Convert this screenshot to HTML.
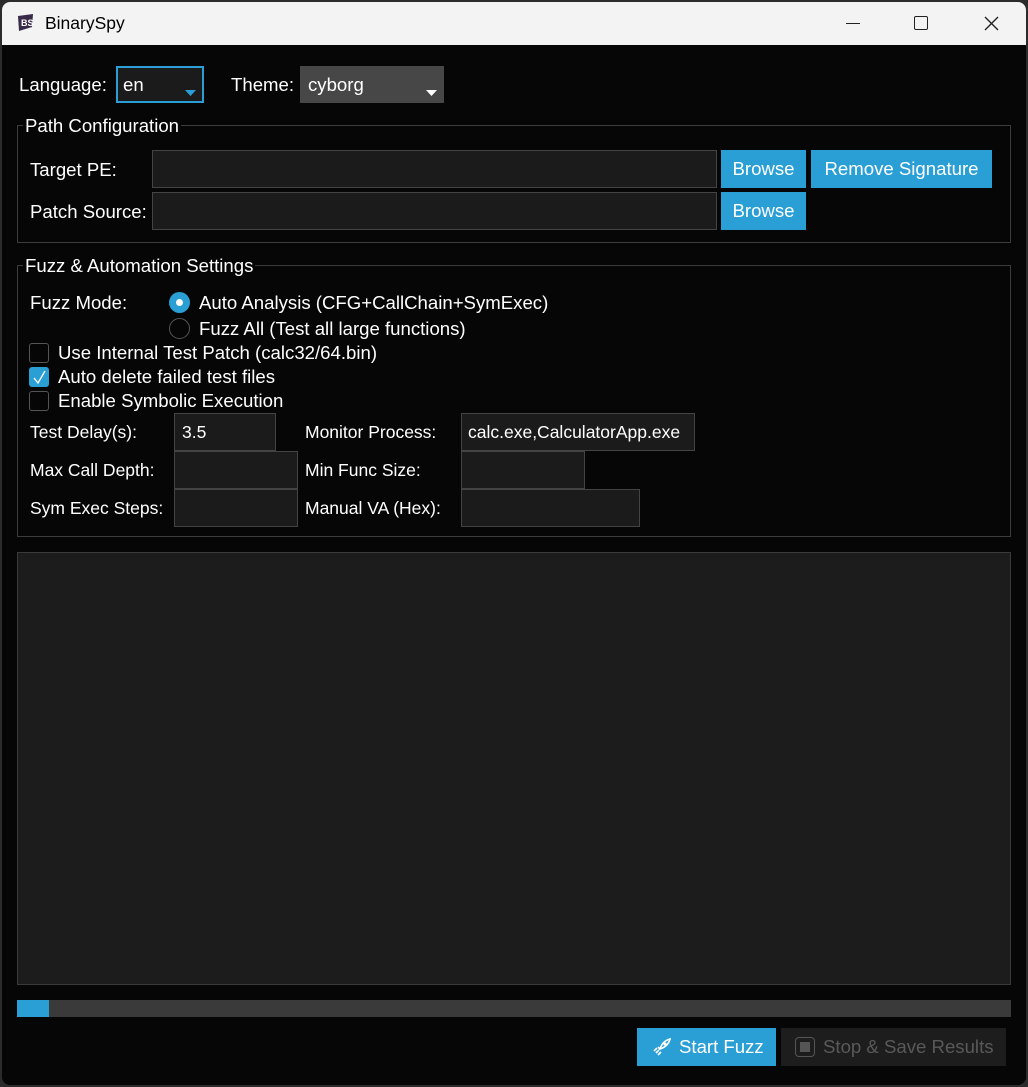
<!DOCTYPE html>
<html><head><meta charset="utf-8"><style>
*{margin:0;padding:0;box-sizing:border-box}
body{width:1028px;height:1087px;background:#2b2b2b;position:relative;overflow:hidden;font-family:"Liberation Sans",sans-serif;font-size:18.6px;color:#fff}
.win{position:absolute;left:2px;top:2px;width:1024px;height:1083px;background:#060606;border-radius:8px;overflow:hidden}
.tb{position:absolute;left:0;top:0;width:100%;height:43px;background:#f3f3f3;color:#000}
.a{position:absolute;white-space:nowrap}
.in{position:absolute;background:#1b1b1b;border:1px solid #444}
.btn{position:absolute;background:#2a9fd6;color:#fff;text-align:center}
.gb{position:absolute;border:1px solid #3c3c3c}
.lg{position:absolute;background:#060606;padding:0 2px;white-space:nowrap}
.cb{position:absolute;width:20px;height:20px;border:1.5px solid #555;border-radius:3px;background:#060606}
.n{font-size:17.5px}
</style></head><body><div class="win">
<div class="tb">
<svg class="a" style="left:13px;top:10px" width="22" height="22" viewBox="0 0 22 22"><path d="M3 4 L18 2 L17 15 L4 19 Z" fill="#3a2a4a"/><text x="6" y="14" font-size="9" fill="#fff" font-weight="bold" font-family="Liberation Sans">BS</text></svg>
<div class="a" style="left:43px;top:11px;font-size:17.5px">BinarySpy</div>
<div class="a" style="left:844px;top:21px;width:14px;height:1px;background:#222"></div>
<div class="a" style="left:912px;top:14px;width:14px;height:14px;border:1.5px solid #222;border-radius:2px"></div>
<svg class="a" style="left:982px;top:14px" width="15" height="15"><path d="M1 1L14 14M14 1L1 14" stroke="#222" stroke-width="1.4"/></svg>
</div>

<div class="a" style="left:17px;top:72px">Language:</div>
<div class="in" style="left:114px;top:64px;width:88px;height:37px;border:2px solid #2a9fd6"></div>
<div class="a" style="left:121px;top:72px">en</div>
<svg class="a" style="left:183px;top:88px" width="11" height="6"><path d="M0 0H11L5.5 6Z" fill="#2a9fd6"/></svg>
<div class="a" style="left:229px;top:72px">Theme:</div>
<div class="a" style="left:298px;top:64px;width:144px;height:37px;background:#474747"></div>
<div class="a" style="left:306px;top:72px">cyborg</div>
<svg class="a" style="left:424px;top:88px" width="11" height="6"><path d="M0 0H11L5.5 6Z" fill="#fff"/></svg>

<div class="gb" style="left:15px;top:123px;width:994px;height:118px"></div>
<div class="lg" style="left:21px;top:113px">Path Configuration</div>
<div class="a" style="left:28px;top:157px">Target PE:</div>
<div class="in" style="left:150px;top:148px;width:565px;height:38px"></div>
<div class="btn" style="left:719px;top:148px;width:85px;height:38px;line-height:38px">Browse</div>
<div class="btn" style="left:809px;top:148px;width:181px;height:38px;line-height:38px">Remove Signature</div>
<div class="a" style="left:28px;top:199px">Patch Source:</div>
<div class="in" style="left:150px;top:190px;width:565px;height:38px"></div>
<div class="btn" style="left:719px;top:190px;width:85px;height:38px;line-height:38px">Browse</div>

<div class="gb" style="left:15px;top:263px;width:994px;height:272px"></div>
<div class="lg" style="left:21px;top:253px">Fuzz &amp; Automation Settings</div>
<div class="a" style="left:28px;top:290px">Fuzz Mode:</div>
<div class="a" style="left:167px;top:290px;width:21px;height:21px;border-radius:50%;background:#2a9fd6"></div>
<div class="a" style="left:174px;top:297px;width:7px;height:7px;border-radius:50%;background:#fff"></div>
<div class="a" style="left:197px;top:290px">Auto Analysis (CFG+CallChain+SymExec)</div>
<div class="a" style="left:167px;top:316px;width:21px;height:21px;border-radius:50%;border:1.5px solid #555"></div>
<div class="a" style="left:197px;top:316px">Fuzz All (Test all large functions)</div>
<div class="cb" style="left:27px;top:341px"></div>
<div class="a" style="left:56px;top:340px">Use Internal Test Patch (calc32/64.bin)</div>
<div class="cb" style="left:27px;top:365px;background:#2a9fd6;border-color:#2a9fd6"></div>
<svg class="a" style="left:30px;top:368px" width="15" height="15"><path d="M2 8L6 13L13 1" stroke="#fff" stroke-width="1.3" fill="none"/></svg>
<div class="a" style="left:56px;top:364px">Auto delete failed test files</div>
<div class="cb" style="left:27px;top:389px"></div>
<div class="a" style="left:56px;top:388px">Enable Symbolic Execution</div>

<div class="a n" style="left:28px;top:420px">Test Delay(s):</div>
<div class="in" style="left:172px;top:411px;width:102px;height:38px"></div>
<div class="a n" style="left:180px;top:420px">3.5</div>
<div class="a n" style="left:303px;top:420px">Monitor Process:</div>
<div class="in n" style="left:459px;top:411px;width:234px;height:38px;overflow:hidden"><span style="position:absolute;left:6px;top:8px;white-space:nowrap">calc.exe,CalculatorApp.exe</span></div>
<div class="a n" style="left:28px;top:458px">Max Call Depth:</div>
<div class="in" style="left:172px;top:449px;width:124px;height:38px"></div>
<div class="a n" style="left:303px;top:458px">Min Func Size:</div>
<div class="in" style="left:459px;top:449px;width:124px;height:38px"></div>
<div class="a n" style="left:28px;top:496px">Sym Exec Steps:</div>
<div class="in" style="left:172px;top:487px;width:124px;height:38px"></div>
<div class="a n" style="left:303px;top:496px">Manual VA (Hex):</div>
<div class="in" style="left:459px;top:487px;width:179px;height:38px"></div>

<div class="in" style="left:15px;top:550px;width:994px;height:433px;background:#1c1c1c;border-color:#3a3a3a"></div>
<div class="a" style="left:15px;top:998px;width:994px;height:17px;background:#3a3a3a"></div>
<div class="a" style="left:15px;top:998px;width:32px;height:17px;background:#2a9fd6"></div>

<div class="btn" style="left:635px;top:1026px;width:139px;height:38px"></div>
<svg class="a" style="left:650px;top:1035px" width="20" height="20" viewBox="0 0 20 20"><path d="M8 12C10 6 14 3 18 2C17 6 14 10 8 12ZM8 12L6 10M4 16L7 13M2 14L5 11M6 18L9 15" stroke="#fff" stroke-width="1.6" fill="none"/><circle cx="13" cy="7" r="1.5" fill="#fff"/></svg>
<div class="a" style="left:677px;top:1034px">Start Fuzz</div>
<div class="a" style="left:779px;top:1026px;width:225px;height:38px;background:#1d1d1d"></div>
<div class="a" style="left:793px;top:1035px;width:20px;height:20px;border:1.5px solid #555;border-radius:4px"></div>
<div class="a" style="left:798px;top:1040px;width:10px;height:10px;background:#555"></div>
<div class="a" style="left:821px;top:1034px;color:#595959">Stop &amp; Save Results</div>
</div></body></html>
